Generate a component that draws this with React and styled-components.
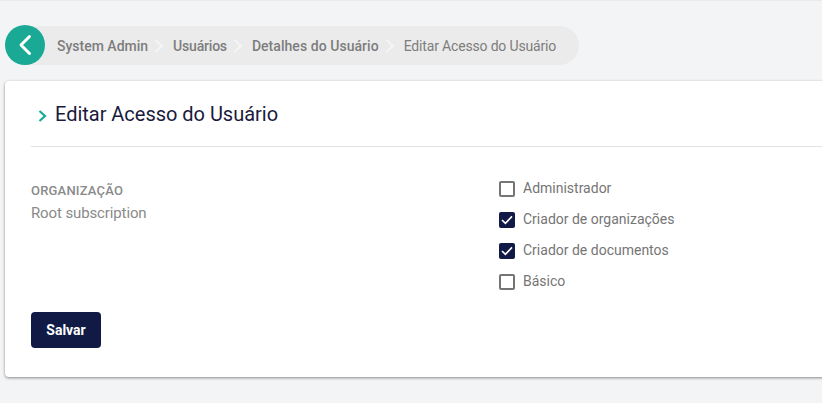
import React from 'react';
import styled, { createGlobalStyle } from 'styled-components';

const Global = createGlobalStyle`
  html, body { margin: 0; padding: 0; background: #f3f4f6; }
  body { font-family: Roboto, "Liberation Sans", sans-serif; overflow: hidden; }
  * { box-sizing: border-box; }
`;

function App() {
  return (
    <Page>
      <Global />
      <TopLine />
      <BreadcrumbRow>
        <BackButton>
          <svg width="16" height="22" viewBox="0 0 16 22" fill="none">
            <path d="M12.5 2.5 L4 11 L12.5 19.5" stroke="#fff" strokeWidth="3" strokeLinecap="round" strokeLinejoin="round" />
          </svg>
        </BackButton>
        <Breadcrumb>
          <Crumb>System Admin</Crumb>
          <Sep />
          <Crumb $spacing={-0.2}>Usuários</Crumb>
          <Sep />
          <Crumb $spacing={0.05}>Detalhes do Usuário</Crumb>
          <Sep />
          <Crumb $current $spacing={-0.17}>Editar Acesso do Usuário</Crumb>
        </Breadcrumb>
      </BreadcrumbRow>
      <Card>
        <CardHeader>
          <TitleArrow width="9" height="12" viewBox="0 0 9 12" fill="none">
            <path d="M1.5 1 L7 6 L1.5 11" stroke="#1aa995" strokeWidth="2.2" />
          </TitleArrow>
          <Title>Editar Acesso do Usuário</Title>
        </CardHeader>
        <Columns>
          <OrgColumn>
            <OrgLabel>ORGANIZAÇÃO</OrgLabel>
            <OrgName>Root subscription</OrgName>
          </OrgColumn>
          <Checks>
            <Check label="Administrador" />
            <Check label="Criador de organizações" checked />
            <Check label="Criador de documentos" checked />
            <Check label="Básico" />
          </Checks>
        </Columns>
        <SaveButton>Salvar</SaveButton>
      </Card>
    </Page>
  );
}

function Check({ label, checked }) {
  return (
    <CheckRow>
      <Box $checked={checked}>
        {checked && (
          <svg width="12" height="10" viewBox="0 0 12 10" fill="none">
            <path d="M1 5 L4.4 8.4 L11 1.4" stroke="#fff" strokeWidth="1.6" />
          </svg>
        )}
      </Box>
      <CheckLabel>{label}</CheckLabel>
    </CheckRow>
  );
}

export default App;

const Page = styled.div`
  width: 822px;
  height: 403px;
  overflow: hidden;
  padding-left: 5px;
`;

const TopLine = styled.div`
  height: 1px;
  margin-left: -5px;
  background: #e9eaec;
`;

const BreadcrumbRow = styled.div`
  display: flex;
  align-items: center;
  height: 40px;
  margin-top: 24px;
`;

const BackButton = styled.div`
  width: 40px;
  height: 40px;
  border-radius: 50%;
  background: #1aa995;
  display: flex;
  align-items: center;
  justify-content: center;
  flex-shrink: 0;
  position: relative;
  z-index: 1;
`;

const Breadcrumb = styled.div`
  display: flex;
  align-items: center;
  height: 39px;
  margin-left: -20px;
  padding: 2px 23px 0 32px;
  border-radius: 0 20px 20px 0;
  background: #ebebeb;
`;

const Crumb = styled.span`
  font-size: 14px;
  font-weight: ${p => (p.$current ? 400 : 500)};
  letter-spacing: ${p => p.$spacing || 0}px;
  color: #7d7d7d;
  white-space: nowrap;
`;

const Sep = styled.span`
  width: 10px;
  height: 10px;
  margin: 0 12px 0 3px;
  border-top: 2px solid #f5f5f5;
  border-right: 2px solid #f5f5f5;
  transform: rotate(45deg);
`;

const Card = styled.div`
  width: 830px;
  height: 296px;
  margin-top: 16px;
  padding-left: 26px;
  background: #fff;
  border-radius: 4px;
  box-shadow: 0 1px 3px rgba(0, 0, 0, 0.45);
`;

const CardHeader = styled.div`
  display: flex;
  align-items: center;
  gap: 8px;
  height: 66px;
  padding: 2px 0 0 7px;
  border-bottom: 1px solid #e2e2e2;
`;

const TitleArrow = styled.svg`
  margin-top: 2px;
`;

const Title = styled.h1`
  margin: 0 0 2px;
  font-size: 20px;
  font-weight: 400;
  letter-spacing: -0.02px;
  color: #1a1a3c;
`;

const Columns = styled.div`
  display: flex;
  height: 165px;
  padding-top: 26px;
`;

const OrgColumn = styled.div`
  width: 468px;
  padding-top: 10px;
`;

const OrgLabel = styled.div`
  font-size: 13px;
  line-height: 15px;
  font-weight: 500;
  letter-spacing: 0.2px;
  color: #8a8a8a;
`;

const OrgName = styled.div`
  margin-top: 6px;
  font-size: 15px;
  line-height: 18px;
  letter-spacing: -0.12px;
  color: #8a8a8a;
`;

const Checks = styled.div`
  display: flex;
  flex-direction: column;
`;

const CheckRow = styled.label`
  display: flex;
  align-items: center;
  gap: 8px;
  height: 31px;
`;

const Box = styled.span`
  width: 16px;
  height: 16px;
  display: flex;
  align-items: center;
  justify-content: center;
  border-radius: 2px;
  background: ${p => (p.$checked ? '#111a45' : '#fff')};
  border: ${p => (p.$checked ? 'none' : '2px solid #757575')};
`;

const CheckLabel = styled.span`
  padding-bottom: 2px;
  font-size: 14px;
  color: #757575;
`;

const SaveButton = styled.button`
  display: block;
  width: 70px;
  height: 36px;
  border: none;
  border-radius: 4px;
  background: #111a45;
  color: #fff;
  font-family: inherit;
  font-size: 14px;
  font-weight: 700;
`;
